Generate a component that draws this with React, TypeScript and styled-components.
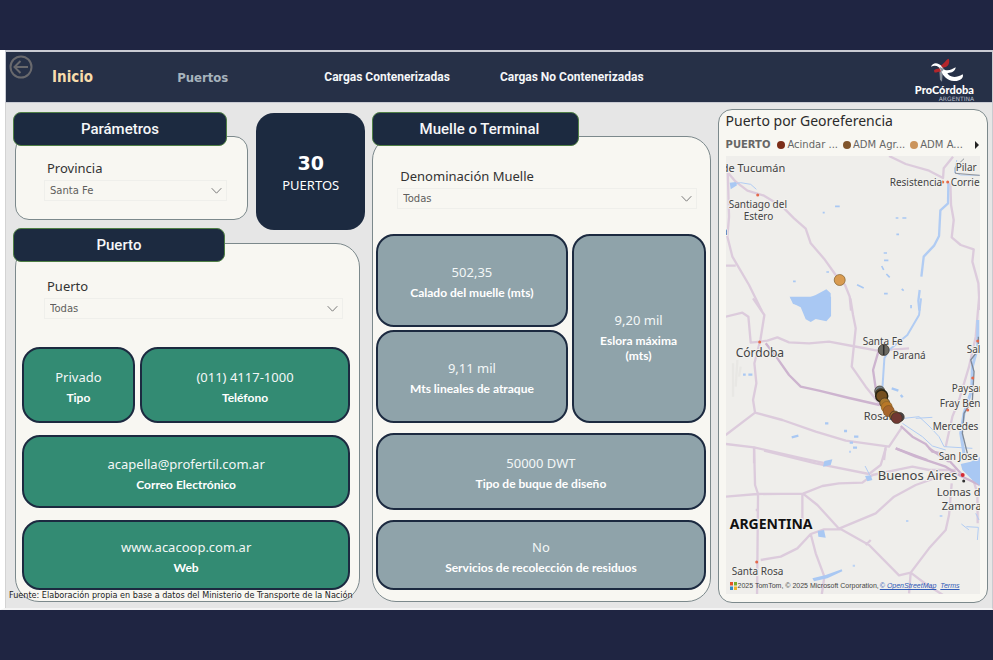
import React, { useId } from "react";
import styled, { createGlobalStyle } from "styled-components";

const Global = createGlobalStyle`
  * { box-sizing: border-box; }
  body { margin: 0; font-family: "Noto Sans", "Open Sans", sans-serif; color: #333; }
  button, select { font: inherit; color: inherit; }
`;

const navy = "#1c2a40";

const Page = styled.div`
  min-height: 100vh;
  padding: 50px 0;
  background: #1f2542;
  display: flex;
`;

const Report = styled.div`
  flex: 1;
  display: flex;
  flex-direction: column;
  background: #e6e6e6;
  border: solid #fff;
  border-width: 0 1px 2px 5px;
  border-right-color: #c9cbd0;
  border-bottom-color: #f4f4f4;
`;

const Header = styled.header`
  display: flex;
  align-items: center;
  height: 53px;
  padding: 0 18px 0 3px;
  border: solid #c9cbd3;
  border-width: 2px 0 1px 1px;
  background: #263047;
`;

const BackButton = styled.button`
  align-self: flex-start;
  width: 24px;
  height: 24px;
  margin-top: 3px;
  padding: 0;
  border: 0;
  background: none;
  line-height: 0;
`;

const Nav = styled.nav`
  flex: 1;
  display: flex;
  align-items: center;
  margin-left: 19px;
`;

const NavLink = styled.a<{ $kind?: "active" | "muted"; $gap?: number }>`
  margin-right: ${p => p.$gap ?? 0}px;
  text-decoration: none;
  white-space: nowrap;
  color: ${p => (p.$kind === "active" ? "#f7dcab" : p.$kind === "muted" ? "#a6b3bd" : "#f4f6f8")};
  font-weight: 700;
  font-size: ${p => (p.$kind === "active" ? 15 : p.$kind === "muted" ? 13 : 12)}px;
  font-family: ${p => (p.$kind ? '"DejaVu Sans Condensed", "DejaVu Sans"' : "Roboto")}, sans-serif;
`;

const Brand = styled.div`
  display: flex;
  flex-direction: column;
  align-items: flex-end;
  align-self: flex-start;
  padding-top: 6px;
  color: #fff;
  font: 900 11px/12px Lato, sans-serif;
  svg { margin-right: 10px; }
  small { font: 400 6px/5px "DejaVu Sans", sans-serif; color: #b8bfca; }
`;

const Main = styled.main`
  flex: 1;
  display: grid;
  grid-template-columns: 353fr 339fr 271fr;
  gap: 7px;
  padding: 6px 4px 5px 7px;
  border-left: 1px solid #d3d3d3;
`;

const Column = styled.div`
  position: relative;
  display: flex;
  flex-direction: column;
  padding: 3px 0 1px;
`;

const TopRow = styled.div`
  display: grid;
  grid-template-columns: 235fr 109fr;
  gap: 8px;
  height: 118px;
  margin-bottom: -2px;
`;

const Section = styled.section<{ $trail?: number; $fill?: boolean; $below?: number }>`
  display: flex;
  flex-direction: column;
  flex: ${p => (p.$fill ? 1 : "none")};
  margin-right: ${p => p.$trail ?? 0}px;
  margin-bottom: ${p => p.$below ?? 0}px;
`;

const SectionTitle = styled.h2<{ $width: number; $overlap: number; $shift?: number }>`
  position: relative;
  z-index: 1;
  width: ${p => p.$width}%;
  height: 34px;
  margin: 0 0 -${p => p.$overlap}px;
  padding-left: ${p => p.$shift ?? 0}px;
  border: 1px solid #4f7f45;
  border-radius: 8px;
  background: ${navy};
  color: #f6f7f9;
  font: 500 15px/32px Roboto, sans-serif;
  text-align: center;
`;

const Card = styled.div<{ $pad: string; $radius: number; $inset?: number }>`
  flex: 1;
  display: flex;
  flex-direction: column;
  margin-left: ${p => p.$inset ?? 0}px;
  padding: ${p => p.$pad};
  border: 1px solid #7c898c;
  border-radius: ${p => p.$radius}px;
  background: #f8f7f2;
`;

const Field = styled.div<{ $pad: string }>`
  display: flex;
  flex-direction: column;
  gap: 3px;
  padding: ${p => p.$pad};
`;

const FieldLabel = styled.label`
  padding-left: 3px;
  font-size: 13px;
  line-height: 18px;
`;

const SelectBox = styled.div`
  position: relative;
  border: 1px solid #efefeb;
  svg { position: absolute; right: 4px; top: 6px; pointer-events: none; }
`;

const Select = styled.select`
  display: block;
  appearance: none;
  width: 100%;
  height: 19px;
  padding: 0 20px 0 5px;
  border: 0;
  background: transparent;
  color: #605e5c;
  font: 10px "DejaVu Sans", sans-serif;
`;

const Total = styled.div`
  display: flex;
  flex-direction: column;
  align-items: center;
  justify-content: center;
  margin-top: 1px;
  padding-top: 4px;
  border-radius: 18px;
  background: ${navy};
  color: #fff;
  font-size: 13px;
  line-height: 22px;
  strong { font: 700 19px/22px "DejaVu Sans", sans-serif; }
`;

const Tiles = styled.div<{ $rows: string; $gap: number }>`
  flex: 1;
  display: grid;
  grid-template-rows: ${p => p.$rows};
  gap: ${p => p.$gap}px;
`;

const TileRow = styled.div<{ $cols: string; $gap: number }>`
  display: grid;
  grid-template-columns: ${p => p.$cols};
  gap: ${p => p.$gap}px;
`;

const TileStack = styled.div`
  display: grid;
  grid-template-rows: 1fr 1fr;
  gap: 3px;
`;

const TileBox = styled.div<{ $tone: "green" | "gray"; $low?: boolean }>`
  display: flex;
  flex-direction: column;
  align-items: center;
  justify-content: center;
  padding: ${p => (p.$low ? 16 : 2)}px 18px 0;
  border: 2px solid ${navy};
  border-radius: 18px;
  background: ${p => (p.$tone === "green" ? "#338b73" : "#8fa3aa")};
  color: #f3f7f7;
  font-size: 13px;
  line-height: 20px;
  text-align: center;
  strong { margin-top: 3px; color: #fff; font: 700 12px/15px Lato, sans-serif; }
`;

const Source = styled.p`
  position: absolute;
  left: -4px;
  bottom: 1px;
  margin: 0;
  white-space: nowrap;
  color: #222;
  font: 9px/13px "DejaVu Sans Condensed", "DejaVu Sans", sans-serif;
`;

const MapTitle = styled.h2`
  margin: 0;
  color: #2b2b2b;
  font-weight: 400;
  font-size: 14px;
  line-height: 22px;
`;

const Legend = styled.div`
  display: flex;
  align-items: center;
  height: 24px;
  padding-top: 1px;
  color: #666;
  font: 10px "DejaVu Sans", sans-serif;
  white-space: nowrap;
  b { margin-right: 7px; }
  svg { margin-left: auto; }
`;

const LegendItem = styled.span<{ $color: string }>`
  display: flex;
  align-items: center;
  gap: 2px;
  margin-right: 5px;
  &::before {
    content: "";
    width: 8px;
    height: 8px;
    border-radius: 50%;
    background: ${p => p.$color};
  }
`;

const MapFrame = styled.div`
  position: relative;
  flex: 1;
  min-height: 438px;
  overflow: hidden;
  background: #efeeeb;
`;

const MapDrawing = styled.svg`
  position: absolute;
  inset: 0;
  width: 100%;
  height: 100%;
  font-family: "Noto Sans", sans-serif;
`;

const Credits = styled.div`
  position: absolute;
  left: 4px;
  bottom: 2px;
  display: flex;
  align-items: center;
  gap: 1px;
  color: #444;
  font: 7px/12px "Liberation Sans", sans-serif;
  white-space: nowrap;
  a { color: #2f5bb7; font-style: italic; }
  a:last-child { margin-left: 3px; }
`;

function Dropdown({ label, value, pad }: { label: string; value: string; pad: string }) {
  const id = useId();
  return (
    <Field $pad={pad}>
      <FieldLabel htmlFor={id}>{label}</FieldLabel>
      <SelectBox>
        <Select id={id} defaultValue={value}>
          <option>{value}</option>
        </Select>
        <svg width="11" height="8" viewBox="0 0 11 8" fill="none" stroke="#7a7a7a">
          <path d="M.7 1.2 5.5 6.2 10.3 1.2" />
        </svg>
      </SelectBox>
    </Field>
  );
}

type TileProps = { value: string; label: string; tone: "green" | "gray"; low?: boolean };

function Tile({ value, label, tone, low }: TileProps) {
  return (
    <TileBox $tone={tone} $low={low}>
      <span>{value}</span>
      <strong>{label}</strong>
    </TileBox>
  );
}

function BrandMark() {
  return (
    <svg width="36" height="26" viewBox="0 0 108 78" fill="none">
      <path d="M33 20 46 22 42 71 36 65Z" fill="#8b929c" />
      <path d="M38 23C50 16 52 6 62 2C66 10 63 22 54 27L43 29Z" fill="#b3262b" />
      <path d="M18 37C24 32 31 30 39 32L37 42C29 39 25 46 19 43Z" fill="#b3262b" />
      <path d="M9 26C13 13 30 12 39 23C45 31 47 36 58 37C68 37 75 31 83 28C82 41 69 46 58 45C63 57 82 62 104 49C109 60 94 71 78 69C57 67 46 55 39 38C34 25 23 20 9 26Z" fill="#fff" />
      <path d="M34 26 48 33 41 42Z" fill="#8b929c" />
    </svg>
  );
}

/* Roads, rivers and lakes come in three stacked strips drawn at triple scale. */
function RegionMap() {
  const road = { stroke: "#dccbdc", strokeWidth: 7, fill: "none", strokeLinejoin: "round" as const };
  const main = { stroke: "#cdb4cf", strokeWidth: 7, fill: "none", strokeLinejoin: "round" as const };
  const river = { stroke: "#b1ccf3", strokeWidth: 7, fill: "none", strokeLinejoin: "round" as const };
  const thin = { ...river, strokeWidth: 3 };
  const lake = { fill: "#a9c8f3" };
  return (
    <MapDrawing viewBox="725 156 255 438" preserveAspectRatio="xMidYMid slice" role="img" aria-label="Mapa de puertos">
      <g transform="translate(715 150) scale(.33333)">
        <path {...road} d="M30 60 60 95 95 122 145 137 200 170 235 205 270 236 285 280 325 326 360 375 388 405 402 440 406 482M36 60 40 200 35 260 50 320 100 405 138 482M30 347H60M520 18 570 42 640 62 682 84 684 55 712 20M704 98 706 165 714 210 708 262 735 285 774 298 770 335 788 400 792 480" />
        <path {...river} d="M698 100 697 160 674 181 670 258 655 287 624 320 617 380M612 420 608 452 611 482" />
        <path {...thin} d="M44 103 75 98 105 103 122 118M723 30 717 68 735 75 792 76" />
        <path {...lake} d="M42 98 60 96 64 106 45 118ZM222 440 245 456 300 435 332 418 345 430V482H275L255 465 232 462Z" />
        <path d="M745 26 718 52 719 70 792 76" stroke="#8f9298" strokeWidth="3" fill="none" />
        <path d="M358 169H372M321 188H327M540 204H548M560 204H572M542 253H550M504 309H514M505 331H518M498 348 504 360M512 372 522 382M424 404 444 414M505 431H516M558 417 564 422M332 366H340M232 394H240M586 465V475" stroke="#a9c8f3" strokeWidth="5" />
      </g>
      <g transform="translate(715 300) scale(.33333)">
        <path {...road} d="M112 -5 146 45 134 120 116 190 122 250 112 300 118 338M30 50 80 38 98 50 105 128 134 125M134 125 155 122 185 112 220 127 280 130 340 125 410 138 485 152 580 145M404 -5 412 45 420 85 408 200 450 260 492 312M30 405 118 338 200 360 300 395 390 422 520 440 560 380M30 432 115 442 260 475 330 490M115 442V490M510 440 505 480M790 -5 780 110 760 200 730 300 710 350 690 440" />
        <path {...main} d="M150 130 185 175 220 225 255 260 310 272 400 294 492 315M488 155 472 210 480 265M555 378 590 410 630 432 650 455 700 465M540 445 635 480" />
        <path {...thin} strokeWidth={6} d="M616 -5 610 45 575 105 520 150 506 175 500 265" />
        <path {...thin} d="M565 355 610 350 640 378 670 410 685 440 770 445M560 370 620 410 650 438 690 450M600 355 650 352" />
        <path {...river} d="M786 60V140L770 200 768 270 745 340 735 400 745 462" strokeWidth="9" />
        <path d="M788 110V150L765 180 775 215 770 300 745 340 740 400 755 460" stroke="#7e8998" strokeWidth="4" fill="none" />
        <path {...lake} d="M222 -10 235 12 255 22 270 58 285 66 300 57 332 64 346 48V-10Z" />
        <path d="M528 265 548 272M555 285 561 292M82 224H90M98 224H110M328 370H338M228 412 248 407M385 393H394M415 410H428M402 428H412M412 443H424" stroke="#a9c8f3" strokeWidth="7" />
        <path d="M52 190V290M65 180 60 260M75 200 70 230" stroke="#e8e7e4" strokeWidth="7" />
      </g>
      <g transform="translate(715 450) scale(.33333)">
        <path {...road} d="M115 -10 118 105 127 132 124 435M30 140 125 132 262 131 320 108 370 100 440 98 470 75 590 50 640 60 720 60M145 2 300 40 460 72 495 45 510 -5M260 131V210M262 131 305 165 370 236 480 190 535 140 600 105 710 66M135 330 195 320 245 295 285 252 325 238H376L460 285 550 376 585 368 640 295 690 240 700 195 708 100M285 252 300 310 326 380 318 435M585 368 580 430M585 368 630 402 682 435M770 80 785 130 786 220M120 180H128M450 285 465 270" />
        <path {...main} d="M540 -5 600 20 690 50 735 78 792 105M690 20 740 75M640 -5 700 35" />
        <path {...lake} d="M735 42 765 35 795 20V108L770 90 740 60ZM326 33 350 28 345 45 322 50ZM306 243 325 240 330 263 308 260ZM290 385 330 375 378 358 380 364 335 385 295 394ZM448 78 465 76 470 90 455 94Z" />
        <path {...thin} d="M448 48 462 75M737 222 760 240M752 230 788 232 785 270M780 190 790 210" />
        <path d="M571 213H578M411 347H418M400 5H406M672 198H680" stroke="#bcd3f4" strokeWidth="6" />
      </g>

      <g fill="#e4694b">
        <circle cx="757" cy="195" r="1.5" /><circle cx="942" cy="182" r="1.5" /><circle cx="947" cy="182" r="1.5" />
        <circle cx="759" cy="342" r="1.5" /><circle cx="977" cy="341" r="1.5" /><circle cx="972" cy="378" r="1.5" />
        <circle cx="756" cy="562" r="1.5" /><circle cx="967" cy="410" r="1.5" />
      </g>
      <g fill="#444" fontSize="10" stroke="#f2f1ee" strokeWidth="2" paintOrder="stroke">
        <text x="721" y="172" fontSize="11">de Tucumán</text>
        <text x="955" y="171">Pilar</text>
        <text x="889" y="186">Resistencia</text>
        <text x="950" y="186">Corrientes</text>
        <text x="728" y="208">Santiago del</text>
        <text x="743" y="220">Estero</text>
        <text x="735" y="357" fontSize="12">Córdoba</text>
        <text x="862" y="345">Santa Fe</text>
        <text x="892" y="359">Paraná</text>
        <text x="966" y="353">Salto</text>
        <text x="951" y="392">Paysandú</text>
        <text x="939" y="407">Fray Bentos</text>
        <text x="863" y="420" fontSize="11">Rosario</text>
        <text x="932" y="430">Mercedes</text>
        <text x="938" y="460">San Jose</text>
        <text x="877" y="480" fontSize="13">Buenos Aires</text>
        <text x="936" y="496" fontSize="11">Lomas de</text>
        <text x="941" y="510" fontSize="11">Zamora</text>
        <text x="729" y="529" fontSize="14" fontWeight="700" fill="#111">ARGENTINA</text>
        <text x="731" y="575">Santa Rosa</text>
        <text x="721" y="235">a</text>
      </g>
      <circle cx="962" cy="475" r="2" fill="#d42a35" />
      <circle cx="963" cy="481" r="1.5" fill="#333" />
      <g stroke="#3d3528" strokeWidth=".7">
        <circle cx="839" cy="280" r="5.5" fill="#d99b50" stroke="#80602e" />
        <circle cx="883" cy="350" r="5.5" fill="#6c6a62" />
        <path d="M883 345V355" stroke="#2c2c2c" strokeWidth="1.5" />
        <circle cx="879" cy="391" r="5" fill="#77838a" />
        <circle cx="880" cy="394" r="5.5" fill="#5b4c2d" />
        <circle cx="881" cy="396" r="6" fill="#755020" stroke="#292514" strokeWidth="1.5" />
        <circle cx="884" cy="403" r="5" fill="#a8782f" />
        <circle cx="886" cy="407" r="5.5" fill="#b87827" stroke="#8b6227" />
        <circle cx="888" cy="411" r="5.5" fill="#a7652b" stroke="#815422" />
        <circle cx="899" cy="417" r="4.5" fill="#4b4548" />
        <circle cx="894" cy="416" r="5" fill="#92632e" />
        <circle cx="896" cy="418" r="5.5" fill="#713832" />
      </g>
    </MapDrawing>
  );
}

export default function App() {
  return (
    <Page>
      <Global />
      <Report>
        <Header>
          <BackButton aria-label="Volver">
            <svg width="24" height="24" viewBox="0 0 24 24" fill="none" stroke="#69696d" strokeWidth="2">
              <circle cx="12" cy="12" r="10.5" />
              <path d="M19 12H6M11.5 6 5.5 12 11.5 18" />
            </svg>
          </BackButton>
          <Nav>
            <NavLink href="#inicio" $kind="active" $gap={84}>Inicio</NavLink>
            <NavLink href="#puertos" $kind="muted" $gap={96}>Puertos</NavLink>
            <NavLink href="#contenerizadas" $gap={50}>Cargas Contenerizadas</NavLink>
            <NavLink href="#no-contenerizadas">Cargas No Contenerizadas</NavLink>
          </Nav>
          <Brand>
            <BrandMark />
            ProCórdoba
            <small>ARGENTINA</small>
          </Brand>
        </Header>
        <Main>
          <Column>
            <TopRow>
              <Section $below={10}>
                <SectionTitle $width={91} $overlap={10}>Parámetros</SectionTitle>
                <Card $pad="22px 20px 8px 28px" $radius={14} $inset={2}>
                  <Dropdown label="Provincia" value="Santa Fe" pad="0" />
                </Card>
              </Section>
              <Total>
                <strong>30</strong>
                PUERTOS
              </Total>
            </TopRow>
            <Section $fill $trail={5}>
              <SectionTitle $width={61} $overlap={19}>Puerto</SectionTitle>
              <Card $pad="33px 9px 11px 6px" $radius={24} $inset={2}>
                <Dropdown label="Puerto" value="Todas" pad="0 7px 28px 22px" />
                <Tiles $rows="76fr 73fr 70fr" $gap={12}>
                  <TileRow $cols="113fr 211fr" $gap={5}>
                    <Tile tone="green" value="Privado" label="Tipo" />
                    <Tile tone="green" value="(011) 4117-1000" label="Teléfono" />
                  </TileRow>
                  <Tile tone="green" value="acapella@profertil.com.ar" label="Correo Electrónico" />
                  <Tile tone="green" value="www.acacoop.com.ar" label="Web" />
                </Tiles>
              </Card>
            </Section>
            <Source>Fuente: Elaboración propia en base a datos del Ministerio de Transporte de la Nación</Source>
          </Column>
          <Column>
            <Section $fill>
              <SectionTitle $width={61} $overlap={10} $shift={8}>Muelle o Terminal</SectionTitle>
              <Card $pad="30px 4px 11px 3px" $radius={24}>
                <Dropdown label="Denominación Muelle" value="Todas" pad="0 9px 25px 21px" />
                <Tiles $rows="188fr 77fr 70fr" $gap={10}>
                  <TileRow $cols="190fr 133fr" $gap={4}>
                    <TileStack>
                      <Tile tone="gray" value="502,35" label="Calado del muelle (mts)" />
                      <Tile tone="gray" value="9,11 mil" label="Mts lineales de atraque" />
                    </TileStack>
                    <Tile tone="gray" value="9,20 mil" label="Eslora máxima (mts)" low />
                  </TileRow>
                  <Tile tone="gray" value="50000 DWT" label="Tipo de buque de diseño" />
                  <Tile tone="gray" value="No" label="Servicios de recolección de residuos" />
                </Tiles>
              </Card>
            </Section>
          </Column>
          <Card $pad="0 7px 8px" $radius={14}>
            <MapTitle>Puerto por Georeferencia</MapTitle>
            <Legend>
              <b>PUERTO</b>
              <LegendItem $color="#7c2d18">Acindar ...</LegendItem>
              <LegendItem $color="#80552c">ADM Agr...</LegendItem>
              <LegendItem $color="#cb945c">ADM A...</LegendItem>
              <svg width="6" height="10" viewBox="0 0 6 10"><path d="M1 1 5 5 1 9Z" fill="#222" /></svg>
            </Legend>
            <MapFrame>
              <RegionMap />
              <Credits>
                <svg width="7" height="8" viewBox="0 0 7 8">
                  <path d="M0 0H3V3.5H0Z" fill="#e65426" /><path d="M4 0H7V3.5H4Z" fill="#78ad2b" />
                  <path d="M0 4.5H3V8H0Z" fill="#328bc4" /><path d="M4 4.5H7V8H4Z" fill="#edb42c" />
                </svg>
                <span>2025 TomTom, © 2025 Microsoft Corporation,</span>
                <a href="#osm">© OpenStreetMap</a>
                <a href="#terms">Terms</a>
              </Credits>
            </MapFrame>
          </Card>
        </Main>
      </Report>
    </Page>
  );
}
